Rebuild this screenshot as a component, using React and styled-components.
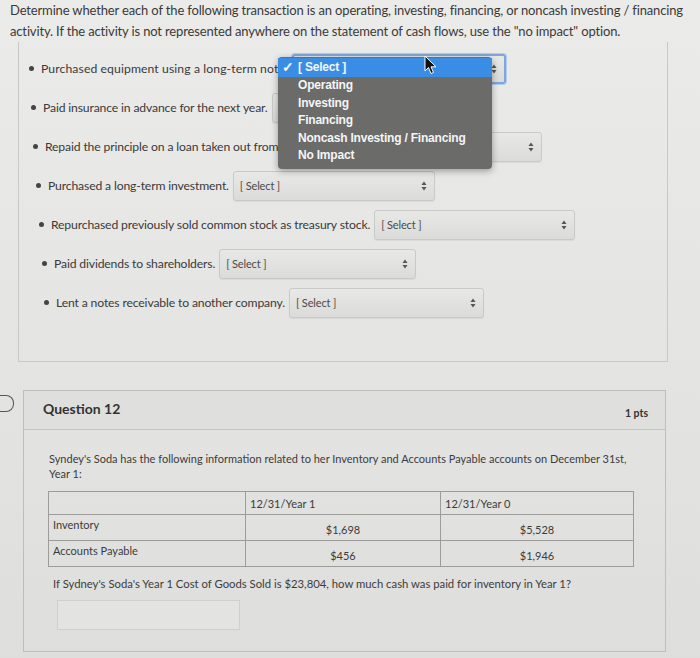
import React from "react"
import styled, { createGlobalStyle } from "styled-components"

const GlobalStyle = createGlobalStyle`
  html, body {
    margin: 0;
    padding: 0;
  }
  body {
    background: #e4e4e2;
    font-family: Lato, "Open Sans", sans-serif;
    color: #3a3a3a;
  }
`

const Page = styled.div`
  position: relative;
  width: 700px;
  height: 658px;
  overflow: hidden;
  background: linear-gradient(180deg, #ebebe9 0%, #e4e4e2 55%, #dededc 100%);
`

const Intro = styled.p`
  margin: 0;
  padding: 0 0 0 10px;
  font-size: 13px;
  line-height: 21px;
  letter-spacing: -0.15px;
  white-space: nowrap;
`

const QuestionBody = styled.div`
  position: relative;
  margin: 0 32px 0 18px;
  height: 320px;
  border: 1px solid #c8c8c6;
  border-top: none;
  box-sizing: border-box;
`

const List = styled.ul`
  margin: 0;
  padding: 7px 0 0 10px;
  list-style: none;
`

const Item = styled.li`
  display: flex;
  align-items: center;
  height: 39px;
  padding-left: ${(p) => p.$indent || 0}px;
  font-size: 12.2px;
  letter-spacing: ${(p) => p.$tracking ?? -0.15}px;
  white-space: nowrap;

  &::before {
    content: "";
    width: 5px;
    height: 5px;
    border-radius: 50%;
    background: #444;
    margin-right: 7px;
    flex: none;
  }
`

const Select = styled.div`
  display: flex;
  align-items: center;
  justify-content: space-between;
  box-sizing: border-box;
  width: ${(p) => p.$width}px;
  height: 30px;
  margin-left: 4px;
  padding: 0 7px 0 6px;
  border: 1px solid #c9c9c7;
  border-radius: 3px;
  background: linear-gradient(180deg, #e8e8e6 0%, #dbdbd9 100%);
  box-shadow: 0 1px 1px rgba(0, 0, 0, 0.06);
  font-size: 11px;
  letter-spacing: -0.15px;
  color: #4a4a4a;
  flex: none;

  ${(p) =>
    p.$focused &&
    `
    border: 2px solid #7fa7dc;
    box-shadow: 0 0 0 1px #b3cbea;
  `}
`

const Arrows = () => (
  <svg width="6" height="10" viewBox="0 0 6 10">
    <path d="M3 0.5 L5.5 4 L0.5 4 Z" fill="#555" />
    <path d="M3 9.5 L5.5 6 L0.5 6 Z" fill="#555" />
  </svg>
)

const Menu = styled.div`
  position: absolute;
  left: 259px;
  top: 15px;
  width: 214px;
  padding: 1px 0 4px;
  background: #6b6b6a;
  border-radius: 4px;
  box-shadow: 0 2px 7px rgba(0, 0, 0, 0.35);
  z-index: 5;
  font-family: "Liberation Sans", Arial, sans-serif;
`

const MenuItem = styled.div`
  position: relative;
  height: ${(p) => (p.$active ? 19 : 17.6)}px;
  line-height: ${(p) => (p.$active ? 19 : 17.6)}px;
  padding-left: 20px;
  font-size: 12px;
  font-weight: 600;
  letter-spacing: -0.2px;
  color: #f5f5f5;
  background: ${(p) => (p.$active ? "#3a8de4" : "transparent")};

  span {
    position: absolute;
    left: 4px;
    top: 0;
    font-size: 14px;
  }
`

const Cursor = styled.svg`
  position: absolute;
  left: 424px;
  top: 55px;
  z-index: 10;
`

const QuestionRow = styled.div`
  display: flex;
  align-items: flex-start;
  margin-top: 28px;
`

const Flag = styled.div`
  width: 13px;
  height: 15px;
  margin-top: 5px;
  margin-right: 9px;
  border: 1.5px solid #555;
  border-left: none;
  border-radius: 0 8px 8px 0;
  flex: none;
`

const Panel = styled.div`
  width: 643px;
  height: 262px;
  border: 1px solid #bebebc;
  box-sizing: border-box;
`

const Header = styled.div`
  display: flex;
  justify-content: space-between;
  align-items: center;
  height: 38px;
  padding: 0 17px 0 19px;
  background: #dfdfdd;
  border-bottom: 1px solid #c3c3c1;
`

const Title = styled.div`
  font-size: 14px;
  font-weight: 700;
  color: #333;
  margin-top: -4px;
`

const Points = styled.div`
  font-size: 10.5px;
  font-weight: 700;
  color: #333;
  margin-top: 6px;
`

const Body = styled.div`
  padding: 21px 30px 0 25px;
  font-size: 11px;
  line-height: 15px;
  color: #3c3c3c;
`

const Paragraph = styled.p`
  margin: 0;
  white-space: nowrap;
`

const Table = styled.table`
  width: 586px;
  margin: 10px 0 0 -1px;
  border-collapse: collapse;
  font-size: 11px;

  td {
    border: 1px solid #9c9c9a;
    padding: 0 4px;
    vertical-align: top;
  }
`

const HeadRow = styled.tr`
  height: 23px;
  td {
    padding-top: 4px;
  }
`

const DataRow = styled.tr`
  height: 26px;
  td {
    padding-top: 2px;
  }
  td.num {
    text-align: center;
    padding-top: 7px;
  }
`

const Prompt = styled.p`
  margin: 9px 0 0 4px;
  font-size: 11.3px;
  white-space: nowrap;
`

const Answer = styled.div`
  width: 183px;
  height: 30px;
  margin: 9px 0 0 8px;
  border: 1px solid #cfcfcd;
  background: #e3e3e1;
  box-sizing: border-box;
`

const options = [
  "Operating",
  "Investing",
  "Financing",
  "Noncash Investing / Financing",
  "No Impact",
]

const rows = [
  { text: "Purchased equipment using a long-term note.", width: 214, indent: 0, tracking: 0.1, focused: true },
  { text: "Paid insurance in advance for the next year.", width: 214, indent: 2 },
  { text: "Repaid the principle on a loan taken out from a bank.", width: 220, indent: 4 },
  { text: "Purchased a long-term investment.", width: 202, indent: 7 },
  { text: "Repurchased previously sold common stock as treasury stock.", width: 201, indent: 10 },
  { text: "Paid dividends to shareholders.", width: 197, indent: 13 },
  { text: "Lent a notes receivable to another company.", width: 195, indent: 15 },
]

const App = () => {
  return (
    <>
      <GlobalStyle />
      <Page>
        <Intro>
          Determine whether each of the following transaction is an operating, investing, financing, or noncash investing / financing
          <br />
          activity. If the activity is not represented anywhere on the statement of cash flows, use the "no impact" option.
        </Intro>

        <QuestionBody>
          <List>
            {rows.map((row) => (
              <Item key={row.text} $indent={row.indent} $tracking={row.tracking}>
                {row.text}
                <Select $width={row.width} $focused={row.focused}>
                  {row.focused ? <span /> : <span>[ Select ]</span>}
                  <Arrows />
                </Select>
              </Item>
            ))}
          </List>

          <Menu>
            <MenuItem $active>
              <span>✓</span>[ Select ]
            </MenuItem>
            {options.map((o) => (
              <MenuItem key={o}>{o}</MenuItem>
            ))}
          </Menu>
        </QuestionBody>

        <Cursor width="14" height="21" viewBox="0 0 14 21">
          <path
            d="M1 1 L1 16 L4.5 12.5 L7 18.5 L9.5 17.5 L7 11.8 L12 11.8 Z"
            fill="#111"
            stroke="#fff"
            strokeWidth="1"
            strokeLinejoin="round"
          />
        </Cursor>

        <QuestionRow>
          <Flag />
          <Panel>
            <Header>
              <Title>Question 12</Title>
              <Points>1 pts</Points>
            </Header>
            <Body>
              <Paragraph>
                Syndey's Soda has the following information related to her Inventory and Accounts Payable accounts on December 31st,
                <br />
                Year 1:
              </Paragraph>
              <Table>
                <tbody>
                  <HeadRow>
                    <td style={{ width: 188 }}></td>
                    <td style={{ width: 186 }}>12/31/Year 1</td>
                    <td>12/31/Year 0</td>
                  </HeadRow>
                  <DataRow>
                    <td>Inventory</td>
                    <td className="num">$1,698</td>
                    <td className="num">$5,528</td>
                  </DataRow>
                  <DataRow>
                    <td>Accounts Payable</td>
                    <td className="num">$456</td>
                    <td className="num">$1,946</td>
                  </DataRow>
                </tbody>
              </Table>
              <Prompt>
                If Sydney's Soda's Year 1 Cost of Goods Sold is $23,804, how much cash was paid for inventory in Year 1?
              </Prompt>
              <Answer />
            </Body>
          </Panel>
        </QuestionRow>
      </Page>
    </>
  )
}

export default App
